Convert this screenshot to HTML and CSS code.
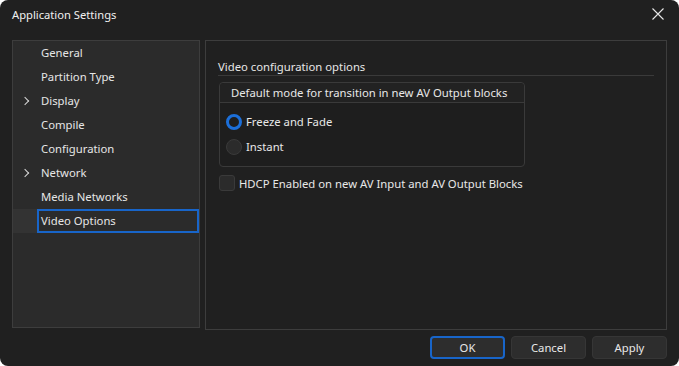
FILE: index.html
```html
<!DOCTYPE html>
<html lang="en">
<head>
    <meta charset="UTF-8">
    <title>Application Settings</title>
    <link rel="stylesheet" href="styles.css">
</head>
<body>
    <div class="window">
        <div class="titlebar">
            <span class="title">Application Settings</span>
            <svg class="close" width="12" height="12" viewBox="0 0 12 12">
                <path d="M0.5 0.5 L11.5 11.5 M11.5 0.5 L0.5 11.5" stroke="#e6e6e6" stroke-width="1.1" fill="none"/>
            </svg>
        </div>

        <div class="content">
            <ul class="nav">
                <li>General</li>
                <li>Partition Type</li>
                <li class="has-children">Display</li>
                <li>Compile</li>
                <li>Configuration</li>
                <li class="has-children">Network</li>
                <li>Media Networks</li>
                <li class="selected"><span>Video Options</span></li>
            </ul>

            <div class="page">
                <div class="section-title">Video configuration options</div>

                <div class="group">
                    <div class="group-header">Default mode for transition in new AV Output blocks</div>
                    <div class="group-body">
                        <label class="radio"><span class="dot checked"></span>Freeze and Fade</label>
                        <label class="radio"><span class="dot"></span>Instant</label>
                    </div>
                </div>

                <label class="check"><span class="box"></span>HDCP Enabled on new AV Input and AV Output Blocks</label>
            </div>
        </div>

        <div class="buttons">
            <button class="btn default">OK</button>
            <button class="btn">Cancel</button>
            <button class="btn">Apply</button>
        </div>
    </div>
</body>
</html>
```

FILE: styles.css
```css
html, body {
    margin: 0;
    padding: 0;
    background: #ffffff;
}

body {
    font-family: "Noto Sans", "Open Sans", sans-serif;
    font-size: 11.3px;
    color: #e8e8e8;
}

.window {
    width: 679px;
    height: 366px;
    background-color: #202020;
    border-radius: 8px;
    overflow: hidden;
    display: flex;
    flex-direction: column;
    box-sizing: border-box;
}

.titlebar {
    height: 28px;
    display: flex;
    align-items: center;
    justify-content: space-between;
    padding: 0 15px 0 12px;
    flex-shrink: 0;
}

.title {
    font-size: 11.2px;
    color: #f0f0f0;
}

.content {
    display: flex;
    gap: 5px;
    padding: 12px 12px 0 12px;
    height: 290px;
    flex-shrink: 0;
}

.nav {
    list-style: none;
    margin: 0;
    padding: 0;
    width: 188px;
    height: 288px;
    box-sizing: border-box;
    background-color: #2b2b2b;
    border: 1px solid #3d3d3d;
}

.nav li {
    height: 24px;
    line-height: 24px;
    padding-left: 28px;
    position: relative;
    color: #e6e6e6;
}

.nav li.has-children::before {
    content: "";
    position: absolute;
    left: 9px;
    top: 9px;
    width: 5px;
    height: 5px;
    border-top: 1px solid #d8d8d8;
    border-right: 1px solid #d8d8d8;
    transform: rotate(45deg);
}

.nav li.selected {
    background-color: #333333;
    padding-left: 24px;
}

.nav li.selected span {
    display: block;
    height: 24px;
    box-sizing: border-box;
    border: 2px solid #1865c9;
    padding-left: 2px;
    line-height: 20px;
    background-color: #2b2b2b;
}

.page {
    flex: 1;
    height: 290px;
    box-sizing: border-box;
    border: 1px solid #3d3d3d;
    padding: 17px 12px 0 12px;
}

.section-title {
    color: #e6e6e6;
    height: 17px;
    line-height: 17px;
    border-bottom: 1px solid #3a3a3a;
    margin-bottom: 6px;
}

.group {
    width: 306px;
    box-sizing: border-box;
    margin-left: 1px;
    border: 1px solid #3a3a3a;
    border-radius: 4px;
    background-color: #1e1e1e;
}

.group-header {
    height: 19px;
    line-height: 19px;
    padding-left: 11px;
    border-bottom: 1px solid #3a3a3a;
    background-color: #222222;
    border-radius: 4px 4px 0 0;
}

.group-body {
    padding: 6px 0 7px 6px;
}

.radio {
    display: flex;
    align-items: center;
    gap: 4px;
    height: 25px;
}

.dot {
    width: 16px;
    height: 16px;
    box-sizing: border-box;
    border-radius: 50%;
    background-color: #2b2b2b;
    border: 1px solid #3a3a3a;
}

.dot.checked {
    background-color: #1e1e1e;
    border: 3px solid #1c6fd9;
}

.check {
    display: flex;
    align-items: center;
    gap: 4px;
    margin-top: 8px;
    margin-left: 1px;
}

.box {
    width: 16px;
    height: 16px;
    box-sizing: border-box;
    border-radius: 3px;
    background-color: #2b2b2b;
    border: 1px solid #3a3a3a;
}

.buttons {
    display: flex;
    justify-content: flex-end;
    gap: 6px;
    padding: 6px 12px 0 0;
}

.btn {
    width: 75px;
    height: 23px;
    box-sizing: border-box;
    font-family: inherit;
    font-size: 11.3px;
    color: #e8e8e8;
    background-color: #2d2d2d;
    border: 1px solid #363636;
    border-radius: 4px;
    padding: 0;
}

.btn.default {
    border: 2px solid #1865c9;
}
```
